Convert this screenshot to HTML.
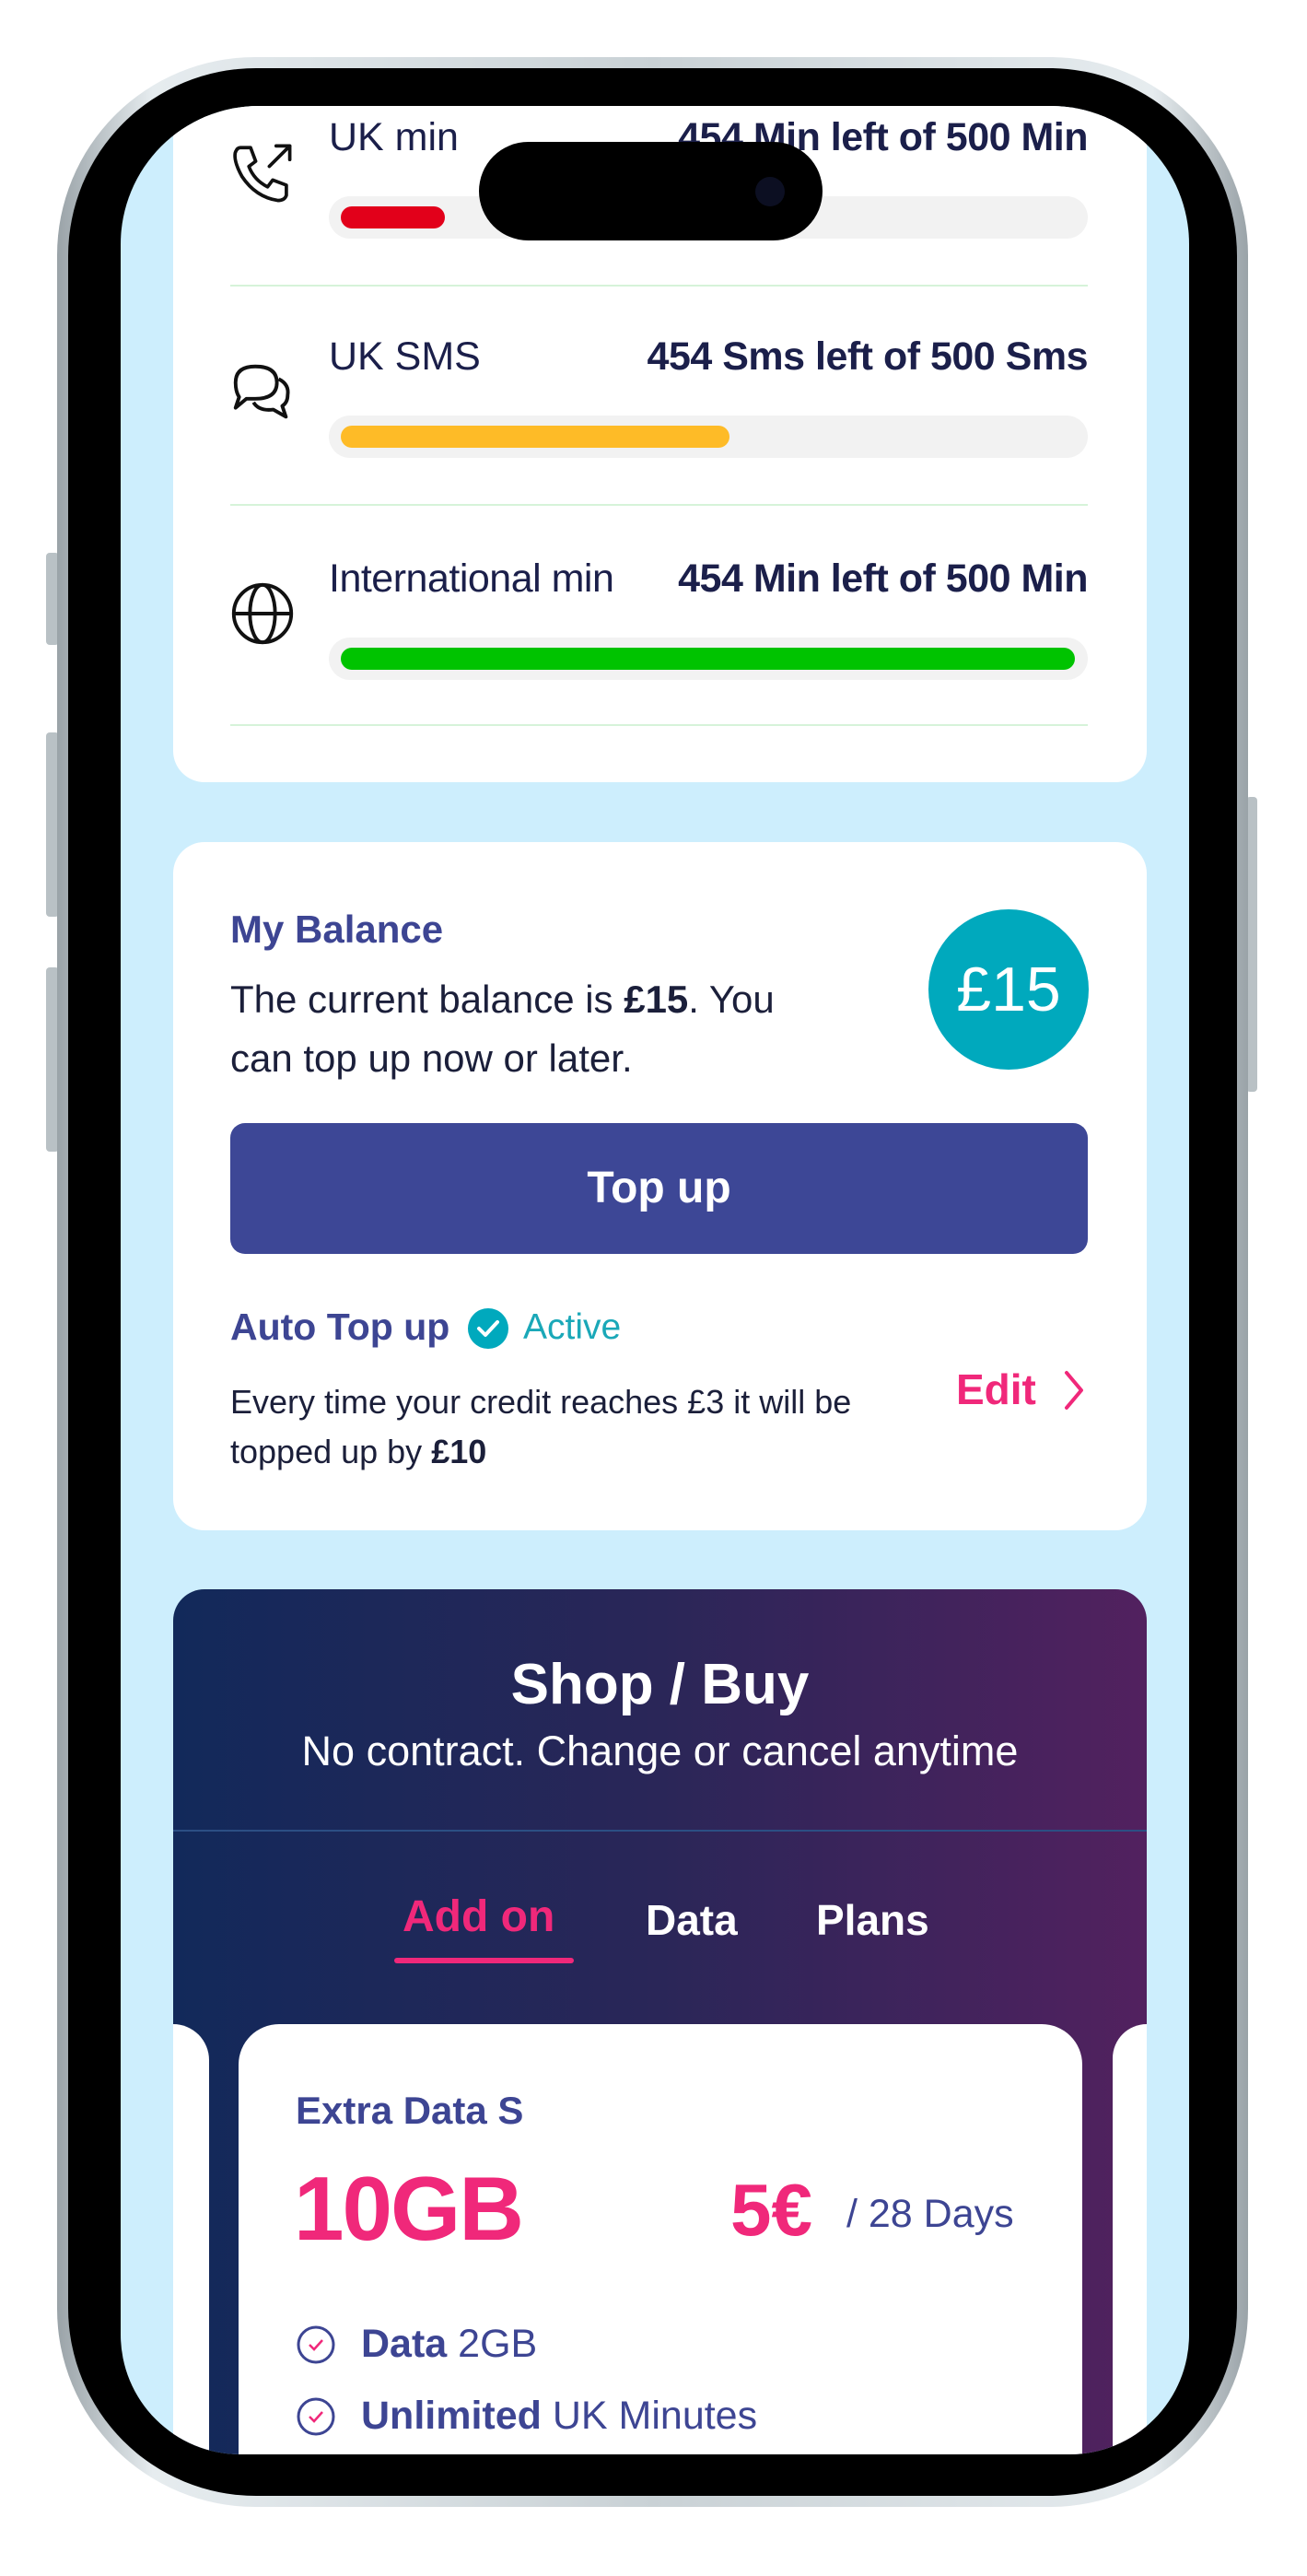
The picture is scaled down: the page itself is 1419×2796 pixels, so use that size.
<!DOCTYPE html>
<html><head><meta charset="utf-8">
<style>
html,body{margin:0;padding:0;background:#fff;}
body{width:1419px;height:2796px;position:relative;overflow:hidden;font-family:"Liberation Sans",sans-serif;}
.abs{position:absolute;}
#frame{left:62px;top:62px;width:1293px;height:2659px;border-radius:215px;background:linear-gradient(90deg,#9aa3a8,#e6ecef 8%,#c9d1d5 50%,#e6ecef 92%,#9aa3a8);}
#bezel{left:74px;top:74px;width:1269px;height:2635px;border-radius:204px;background:#000;}
#screen{left:131px;top:115px;width:1160px;height:2549px;border-radius:150px 150px 130px 130px;background:#cdeefd;overflow:hidden;}
.card{position:absolute;background:#fff;border-radius:34px;}
.lbl{position:absolute;font-size:43px;color:#1b1f4a;}
.val{position:absolute;font-size:43px;color:#1b1f4a;font-weight:bold;right:0;letter-spacing:-0.5px;}
.track{position:absolute;background:#f2f2f2;border-radius:23px;height:46px;}
.fill{position:absolute;top:11px;left:13px;height:24px;border-radius:12px;}
.div{position:absolute;height:2px;background:#d6f3d9;}
</style></head><body>
<div class="abs" style="left:50px;top:600px;width:14px;height:100px;background:#b9c1c5;border-radius:4px"></div>
<div class="abs" style="left:50px;top:795px;width:14px;height:200px;background:#b9c1c5;border-radius:4px"></div>
<div class="abs" style="left:50px;top:1050px;width:14px;height:200px;background:#b9c1c5;border-radius:4px"></div>
<div class="abs" style="left:1353px;top:865px;width:12px;height:320px;background:#b9c1c5;border-radius:4px"></div>
<div id="frame" class="abs"></div>
<div id="bezel" class="abs"></div>
<div id="screen" class="abs">
  <div class="card" style="left:57px;top:-60px;width:1057px;height:794px;"></div>
  <svg class="abs" style="left:117px;top:36px" width="74" height="74" viewBox="0 0 40 40" fill="none" stroke="#111" stroke-width="2" stroke-linecap="round" stroke-linejoin="round">
    <path d="M7 5 L13 5 L16 13 L12 16 Q15 24 23 28 L26 24 L34 27 L34 33 Q33 36 29 36 Q16 34 8 22 Q3 13 4 8 Q5 5 7 5Z"/>
    <path d="M24 16 L36 4 M28 4 L36 4 L36 12"/>
  </svg>
  <div class="lbl" style="left:226px;top:10px">UK min</div>
  <div class="val" style="left:226px;width:824px;top:10px;text-align:right">454 Min left of 500 Min</div>
  <div class="track" style="left:226px;top:98px;width:824px"><div class="fill" style="width:113px;background:#e2001a"></div></div>
  <div class="div" style="left:119px;top:194px;width:931px"></div>

  <svg class="abs" style="left:115px;top:273px" width="78" height="78" viewBox="0 0 40 40" fill="none" stroke="#111" stroke-width="2" stroke-linejoin="round">
    <path d="M5 14 Q5 5 16 5 Q28 5 28 14 Q28 23 16 23 L11 23 L5 28 L7 22 Q5 19 5 14Z"/>
    <path d="M29 12 Q35 15 34 21 Q34 25 31 27 L33 33 L26 29 Q18 30 15 25"/>
  </svg>
  <div class="lbl" style="left:226px;top:248px">UK SMS</div>
  <div class="val" style="left:226px;width:824px;top:248px;text-align:right">454 Sms left of 500 Sms</div>
  <div class="track" style="left:226px;top:336px;width:824px"><div class="fill" style="width:422px;background:#febb27"></div></div>
  <div class="div" style="left:119px;top:432px;width:931px"></div>

  <svg class="abs" style="left:115px;top:512px" width="78" height="78" viewBox="0 0 40 40" fill="none" stroke="#111" stroke-width="2">
    <circle cx="20" cy="20" r="16"/><ellipse cx="20" cy="20" rx="7" ry="16"/><path d="M4 20 H36"/>
  </svg>
  <div class="lbl" style="left:226px;top:489px;letter-spacing:-0.5px">International min</div>
  <div class="val" style="left:226px;width:824px;top:489px;text-align:right">454 Min left of 500 Min</div>
  <div class="track" style="left:226px;top:577px;width:824px"><div class="fill" style="width:797px;background:#00c300"></div></div>
  <div class="div" style="left:119px;top:671px;width:931px"></div>

  <div class="card" style="left:57px;top:799px;width:1057px;height:747px;"></div>
  <div class="abs" style="left:119px;top:870px;font-size:42px;font-weight:bold;color:#3d4593">My Balance</div>
  <div class="abs" style="left:119px;top:938px;font-size:42px;line-height:64px;color:#1b1f3a;width:630px">The current balance is <b>£15</b>. You can top up now or later.</div>
  <div class="abs" style="left:877px;top:872px;width:174px;height:174px;border-radius:50%;background:#00a9bd;color:#fff;font-size:68px;text-align:center;line-height:174px">£15</div>
  <div class="abs" style="left:119px;top:1104px;width:931px;height:142px;border-radius:16px;background:#3d4796;color:#fff;font-size:48px;font-weight:bold;text-align:center;line-height:142px">Top up</div>
  <div class="abs" style="left:119px;top:1302px;font-size:41px;font-weight:bold;color:#3d4593">Auto Top up</div>
  <svg class="abs" style="left:377px;top:1305px" width="44" height="44" viewBox="0 0 44 44"><circle cx="22" cy="22" r="22" fill="#00a9bd"/><path d="M12 22 L19 29 L32 15" stroke="#fff" stroke-width="4" fill="none" stroke-linecap="round" stroke-linejoin="round"/></svg>
  <div class="abs" style="left:437px;top:1304px;font-size:39px;color:#1aa8b8">Active</div>
  <div class="abs" style="left:119px;top:1380px;font-size:36px;line-height:54px;color:#1b1f3a;width:760px">Every time your credit reaches £3 it will be topped up by <b>£10</b></div>
  <div class="abs" style="left:907px;top:1366px;font-size:46px;font-weight:bold;color:#f0287a">Edit</div>
  <svg class="abs" style="left:1022px;top:1370px" width="26" height="48" viewBox="0 0 26 48"><path d="M5 5 L21 24 L5 43" stroke="#f0287a" stroke-width="4" fill="none" stroke-linecap="round" stroke-linejoin="round"/></svg>

  <div class="abs" style="left:57px;top:1610px;width:1057px;height:1100px;border-radius:34px 34px 0 0;background:linear-gradient(90deg,#12295a 0%,#2a2658 50%,#52215f 100%)"></div>
  <div class="abs" style="left:57px;top:1678px;width:1057px;text-align:center;color:#fff;font-size:62px;font-weight:bold">Shop / Buy</div>
  <div class="abs" style="left:57px;top:1760px;width:1057px;text-align:center;color:#fff;font-size:45px">No contract. Change or cancel anytime</div>
  <div class="abs" style="left:57px;top:1871px;width:1057px;height:2px;background:#2c4f84"></div>
  <div class="abs" style="left:306px;top:1938px;font-size:48px;font-weight:bold;color:#f0287a">Add on</div>
  <div class="abs" style="left:297px;top:2010px;width:195px;height:6px;background:#f0287a;border-radius:3px"></div>
  <div class="abs" style="left:570px;top:1942px;font-size:46px;font-weight:bold;color:#fff">Data</div>
  <div class="abs" style="left:755px;top:1942px;font-size:46px;font-weight:bold;color:#fff">Plans</div>
  <div class="abs" style="left:57px;top:2082px;width:39px;height:600px;background:#fff;border-radius:0 40px 0 0"></div>
  <div class="abs" style="left:1077px;top:2082px;width:37px;height:600px;background:#fff;border-radius:40px 0 0 0"></div>
  <div class="abs" style="left:128px;top:2082px;width:916px;height:600px;background:#fff;border-radius:44px 44px 0 0"></div>
  <div class="abs" style="left:190px;top:2152px;font-size:42px;font-weight:bold;color:#3d4593">Extra Data S</div>
  <div class="abs" style="left:188px;top:2226px;font-size:98px;font-weight:900;color:#f0287a;letter-spacing:-2px">10GB</div>
  <div class="abs" style="left:662px;top:2238px;font-size:80px;font-weight:bold;color:#f0287a">5€</div>
  <div class="abs" style="left:788px;top:2264px;font-size:43px;color:#3d4593">/ 28 Days</div>
  <svg class="abs" style="left:190px;top:2408px" width="44" height="44" viewBox="0 0 44 44"><circle cx="22" cy="22" r="19" stroke="#3d4593" stroke-width="3" fill="none"/><path d="M15 22 L20 27 L29 17" stroke="#f0287a" stroke-width="2.5" fill="none"/></svg>
  <div class="abs" style="left:261px;top:2405px;font-size:43px;color:#3d4593"><b>Data</b> 2GB</div>
  <svg class="abs" style="left:190px;top:2486px" width="44" height="44" viewBox="0 0 44 44"><circle cx="22" cy="22" r="19" stroke="#3d4593" stroke-width="3" fill="none"/><path d="M15 22 L20 27 L29 17" stroke="#f0287a" stroke-width="2.5" fill="none"/></svg>
  <div class="abs" style="left:261px;top:2483px;font-size:43px;color:#3d4593"><b>Unlimited</b> UK Minutes</div>
</div>
<div class="abs" style="left:520px;top:154px;width:373px;height:107px;border-radius:54px;background:#000"></div>
<div class="abs" style="left:820px;top:192px;width:32px;height:32px;border-radius:50%;background:#0c0f22"></div>
</body></html>
